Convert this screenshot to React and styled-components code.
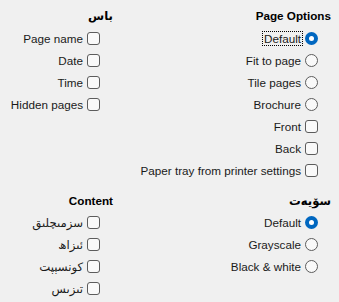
import React from 'react';
import styled, { createGlobalStyle } from 'styled-components';

const Global = createGlobalStyle`
    body {
        margin: 0;
        background: #f0f0f0;
        font-family: "Liberation Sans", "DejaVu Sans", sans-serif;
        font-size: 11.7px;
        color: #000;
    }
`;

const Page = styled.div`
    direction: rtl;
    display: grid;
    grid-template-columns: 218px 113px;
    grid-template-rows: auto auto;
    row-gap: 6px;
    padding: 5px 8px 0 0;
    width: 339px;
    height: 302px;
    box-sizing: border-box;
`;

const Group = styled.div`
    display: flex;
    flex-direction: column;
    align-items: flex-start;
`;

const Heading = styled.div`
    font-weight: bold;
    height: 22px;
    line-height: 22px;
    white-space: nowrap;
`;

const Row = styled.div`
    display: flex;
    align-items: center;
    gap: 2px;
    height: 22px;
    padding-right: 13px;
    white-space: nowrap;
`;

const Label = styled.span`
    padding: 0 1px;
    line-height: 13px;
    color: #1a1a1a;
    border: 1px dotted ${({focused}) => focused ? '#000' : 'transparent'};
`;

const Box = styled.span`
    width: 11px;
    height: 11px;
    flex: none;
    border: 1px solid #5c5c5c;
    border-radius: 3px;
    background: #f9f9f9;
`;

const Radio = styled.span`
    width: ${({checked}) => checked ? '13px' : '11px'};
    height: ${({checked}) => checked ? '13px' : '11px'};
    flex: none;
    border-radius: 50%;
    box-sizing: content-box;
    border: ${({checked}) => checked ? 'none' : '1px solid #5c5c5c'};
    background: ${({checked}) => checked ? '#0067c0' : '#f9f9f9'};
    display: flex;
    align-items: center;
    justify-content: center;
    &::after {
        content: '';
        display: ${({checked}) => checked ? 'block' : 'none'};
        width: 5px;
        height: 5px;
        border-radius: 50%;
        background: #fff;
    }
`;

const Item = ({type, label, checked, focused}) => (
    <Row>
        {type === 'radio' ? <Radio checked={checked} /> : <Box />}
        <Label focused={focused}>{label}</Label>
    </Row>
);

const pageOptions = [
    {type: 'radio', label: 'Default', checked: true, focused: true},
    {type: 'radio', label: 'Fit to page'},
    {type: 'radio', label: 'Tile pages'},
    {type: 'radio', label: 'Brochure'},
    {type: 'box', label: 'Front'},
    {type: 'box', label: 'Back'},
    {type: 'box', label: 'Paper tray from printer settings'},
];

const printItems = ['Page name', 'Date', 'Time', 'Hidden pages'];

const colorItems = [
    {label: 'Default', checked: true},
    {label: 'Grayscale'},
    {label: 'Black & white'},
];

const contentItems = ['سزمىچلىق', 'ئىزاھ', 'كونسېپت', 'تىزىس'];

const App = () => (
    <>
        <Global />
        <Page>
            <Group>
                <Heading>Page Options</Heading>
                {pageOptions.map((o, i) => <Item key={i} {...o} />)}
            </Group>
            <Group>
                <Heading>باس</Heading>
                {printItems.map((l, i) => <Item key={i} type="box" label={l} />)}
            </Group>
            <Group>
                <Heading>سۆیەت</Heading>
                {colorItems.map((o, i) => <Item key={i} type="radio" {...o} />)}
            </Group>
            <Group>
                <Heading>Content</Heading>
                {contentItems.map((l, i) => <Item key={i} type="box" label={l} />)}
            </Group>
        </Page>
    </>
);

export default App;
